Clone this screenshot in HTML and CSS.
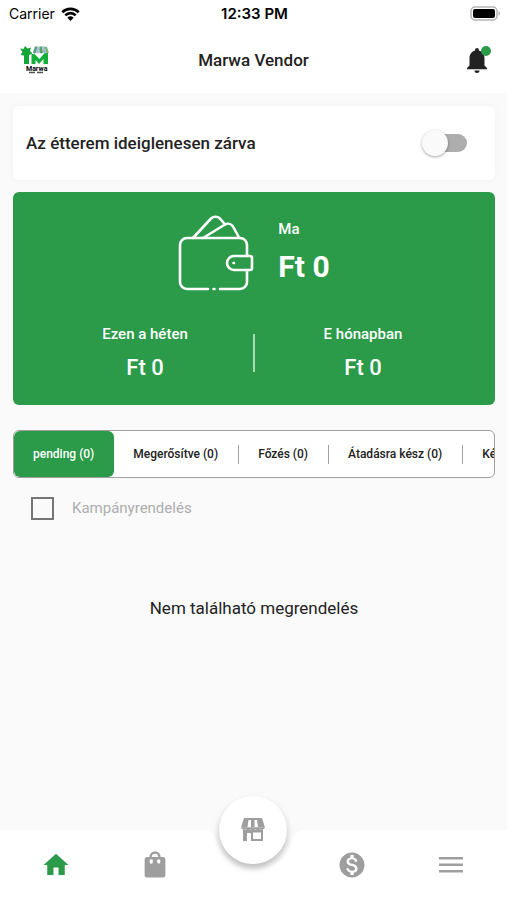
FILE: index.html
```html
<!DOCTYPE html>
<html lang="hu">
<head>
    <meta charset="UTF-8">
    <meta name="viewport" content="width=device-width, initial-scale=1.0">
    <title>Marwa Vendor</title>
    <link rel="stylesheet" href="styles.css">
</head>
<body>
    <div class="status-bar">
        <div class="status-carrier">
            <span>Carrier</span>
            <svg width="19" height="14" viewBox="0 0 19 14" fill="none" stroke="#000" stroke-width="2.6">
                <path d="M1.3 5.2a11.8 11.8 0 0 1 16.4 0"/>
                <path d="M4.3 8.3a7.4 7.4 0 0 1 10.4 0"/>
                <path d="M9.5 14 6.4 10.8a4.5 4.5 0 0 1 6.2 0z" fill="#000" stroke="none"/>
            </svg>
        </div>
        <div class="status-time">12:33 PM</div>
        <div class="status-battery">
            <svg width="30" height="15" viewBox="0 0 30 15">
                <rect x="1" y="1" width="26" height="13" rx="4" fill="#fff" stroke="#b5b5b5" stroke-width="1.5"/>
                <rect x="3" y="3" width="22" height="9" rx="2" fill="#000"/>
                <path d="M28.5 5.2v4.6c1-.4 1.5-1.3 1.5-2.3s-.5-1.9-1.5-2.3z" fill="#b5b5b5"/>
            </svg>
        </div>
    </div>

    <header class="header">
        <svg class="logo" width="30" height="30" viewBox="0 0 30 30" role="img" aria-label="Marwa">
            <path d="M0 3.500l3.500.5L5 1l2.500 2.500 3.500-1-1 3.500 2.500 2.500L9 10v9H4v-8.500L.5 10l2-3z" fill="#12a537"/>
            <path d="M11.500 9h3l5 5L24.500 8H28v11h-4.500v-5L19 19l-3.500-4v4h-4z" fill="#12b03a"/>
            <path d="M15 1.500 13 7.500q1.500 2 3 0L17.500 1.500z" fill="#5b9a7c"/>
            <path d="M17.500 1.500 16 7.500q1.800 2 3.500 0V1.500z" fill="#a6bfe0"/>
            <path d="M19.500 1.500v6q1.800 2 3.500 0L22 1.500z" fill="#55a45a"/>
            <path d="M22 1.500l1 6q1.800 2 3.200 0L24.500 1.500z" fill="#9db7dc"/>
            <path d="M24.500 1.500l1.700 6q1.400 1.500 2.600 0L27 2z" fill="#7ab56f"/>
            <text x="6" y="26" class="logo-name">Marwa</text>
            <path d="M9 27.500h6M17 27.500h6" stroke="#555" stroke-width="1.500"/>
        </svg>
        <h1>Marwa Vendor</h1>
        <button class="bell" type="button" aria-label="Értesítések">
            <svg width="20" height="25" viewBox="0 0 20 25" fill="#222">
                <path d="M7.500 22.500h5a2.500 2.500 0 0 1-5 0z"/>
                <path d="M10 0c-1.100 0-1.900.8-1.900 1.900v.7C4.700 3.500 2.500 6.500 2.500 10v7.500L0 20v1.300h20V20l-2.500-2.500V10c0-3.500-2.200-6.500-5.600-7.400v-.7C11.900.8 11.100 0 10 0z"/>
            </svg>
            <span class="bell-dot"></span>
        </button>
    </header>

    <main class="content">
        <label class="card closed-card">
            <span>Az étterem ideiglenesen zárva</span>
            <input class="switch" type="checkbox" role="switch">
        </label>

        <section class="card earnings">
            <div class="earnings-today">
                <svg width="76" height="76" viewBox="0 0 76 76" fill="none" stroke="#fff" stroke-width="2.6" stroke-linecap="round" stroke-linejoin="round">
                    <path d="M30 74H9a7 7 0 0 1-7-7V30a7 7 0 0 1 7-7h53a7 7 0 0 1 7 7v11M69 55v12a7 7 0 0 1-7 7H42"/>
                    <path d="M72 41H56a7 7 0 0 0 0 14h16a2 2 0 0 0 2-2V43a2 2 0 0 0-2-2z"/>
                    <path d="M15 23 33 3.500a6.500 6.500 0 0 1 9 0l5 6"/>
                    <path d="M25 23 47 9.500a6 6 0 0 1 8 2l6 11"/>
                    <path d="M35.500 74h1M55.500 48h.5"/>
                </svg>
                <div class="today-text">
                    <p class="label">Ma</p>
                    <p class="amount-large">Ft 0</p>
                </div>
            </div>
            <div class="earnings-periods">
                <div class="period">
                    <p class="label">Ezen a héten</p>
                    <p class="amount">Ft 0</p>
                </div>
                <div class="period-divider"></div>
                <div class="period">
                    <p class="label">E hónapban</p>
                    <p class="amount">Ft 0</p>
                </div>
            </div>
        </section>

        <div class="tabs">
            <button class="tab active" type="button">pending (0)</button>
            <button class="tab" type="button">Megerősítve (0)</button>
            <button class="tab" type="button">Főzés (0)</button>
            <button class="tab" type="button">Átadásra kész (0)</button>
            <button class="tab" type="button">Kész (0)</button>
        </div>

        <label class="campaign">
            <input class="checkbox" type="checkbox">
            <span>Kampányrendelés</span>
        </label>

        <p class="empty">Nem található megrendelés</p>
    </main>

    <nav class="bottom-nav">
        <div class="nav-shape">
            <div class="nav-side"></div>
            <svg width="104" height="70" viewBox="0 0 104 70" fill="#fff">
                <path d="M0 0c9 0 12 4 14 10a39 39 0 0 0 76 0c2-6 5-10 14-10v70H0z"/>
            </svg>
            <div class="nav-side"></div>
        </div>
        <div class="nav-items">
            <a class="nav-item active" href="#" aria-label="Kezdőlap">
                <svg width="30" height="30" viewBox="0 0 24 24"><path d="M10 20v-6h4v6h5v-8h3L12 3 2 12h3v8z"/></svg>
            </a>
            <a class="nav-item" href="#" aria-label="Rendelések">
                <svg width="30" height="30" viewBox="0 0 24 24"><path fill-rule="evenodd" d="M18.500 5.500H16.500A4.500 4.500 0 0 0 7.500 5.500H5.500A2 2 0 0 0 3.700 7.500v12.500a2 2 0 0 0 2 2h12.600a2 2 0 0 0 2-2V7.500a2 2 0 0 0-1.800-2zM12 3a2.600 2.600 0 0 1 2.600 2.500H9.400A2.600 2.600 0 0 1 12 3zM10.200 9.700a1.200 1.200 0 0 1-2.400 0V7.500h2.400zM16.200 9.700a1.200 1.200 0 0 1-2.400 0V7.500h2.400z"/></svg>
            </a>
            <a class="nav-item fab" href="#" aria-label="Étterem">
                <svg width="26" height="26" viewBox="0 0 26 26">
                    <path d="M4 1h18l3 9.500H1z"/>
                    <path d="M8.500 3H11v7H7.500zM14.500 3h2.500l1 7h-3.500z" fill="#fff"/>
                    <path d="M1 10.500h24a3 3 0 0 1-4.800 1.500 3.200 3.200 0 0 1-4.800 0 3.200 3.200 0 0 1-4.800 0 3.200 3.200 0 0 1-4.800 0A3 3 0 0 1 1 10.500z"/>
                    <path fill-rule="evenodd" d="M3 12.500h20V24H11v-8H7v8H3zM13 15.500V22h8v-6.500z"/>
                </svg>
            </a>
            <a class="nav-item" href="#" aria-label="Pénztárca">
                <svg width="30" height="30" viewBox="0 0 24 24"><path d="M12 2C6.480 2 2 6.480 2 12s4.480 10 10 10 10-4.480 10-10S17.520 2 12 2zm1.410 16.090V20h-2.670v-1.930c-1.710-.36-3.160-1.460-3.270-3.400h1.960c.1 1.050.82 1.870 2.650 1.870 1.960 0 2.400-.98 2.400-1.590 0-.83-.44-1.610-2.670-2.140-2.480-.6-4.180-1.620-4.180-3.670 0-1.720 1.390-2.840 3.110-3.210V4h2.670v1.950c1.860.45 2.790 1.860 2.850 3.390H14.300c-.05-1.110-.64-1.870-2.220-1.870-1.500 0-2.400.68-2.400 1.640 0 .84.65 1.390 2.670 1.910s4.180 1.390 4.180 3.910c-.01 1.830-1.380 2.830-3.120 3.160z"/></svg>
            </a>
            <a class="nav-item" href="#" aria-label="Menü">
                <svg width="30" height="30" viewBox="0 0 30 30"><path d="M3 7h24v2.500H3zM3 13.500h24V16H3zM3 20h24v2.500H3z"/></svg>
            </a>
        </div>
    </nav>
</body>
</html>
```
FILE: styles.css
```css
:root {
    --primary: #2b9a49;
    --page-bg: #fafafa;
    --text: #222222;
    --muted: #9e9e9e;
    --tab-border: #a0a0a0;
}

* {
    margin: 0;
    padding: 0;
    box-sizing: border-box;
}

body {
    font-family: Roboto, "Liberation Sans", sans-serif;
    background: var(--page-bg);
    color: var(--text);
    min-height: 100vh;
    display: flex;
    flex-direction: column;
}

svg {
    display: block;
}

button {
    font-family: inherit;
    border: none;
    background: none;
    cursor: pointer;
}

/* Status bar */
.status-bar {
    display: grid;
    grid-template-columns: 1fr auto 1fr;
    align-items: center;
    height: 27px;
    padding: 0 7px 0 9px;
    background: white;
    color: black;
    font-family: Inter, sans-serif;
    font-size: 14px;
}

.status-carrier {
    display: flex;
    align-items: center;
    gap: 6px;
}

.status-time {
    font-size: 15px;
    font-weight: 600;
}

.status-battery {
    justify-self: end;
}

/* Header */
.header {
    display: grid;
    grid-template-columns: 1fr auto 1fr;
    align-items: center;
    height: 66px;
    padding: 0 20px;
    background: white;
}

.header h1 {
    font-size: 17px;
    font-weight: 500;
}

.logo-name {
    font-size: 7px;
    font-weight: 700;
}

.bell {
    justify-self: end;
    position: relative;
}

.bell-dot {
    position: absolute;
    top: -2px;
    right: -4px;
    width: 10px;
    height: 10px;
    border-radius: 50%;
    background: var(--primary);
}

/* Content */
.content {
    flex: 1;
    padding: 13px 12px 0 13px;
}

.card {
    border-radius: 6px;
}

.closed-card {
    display: flex;
    align-items: center;
    justify-content: space-between;
    height: 74px;
    padding: 0 28px 0 13px;
    margin-bottom: 12px;
    background: white;
    box-shadow: 0 0 8px rgba(0, 0, 0, 0.04);
    font-size: 17px;
    font-weight: 500;
    cursor: pointer;
}

.switch {
    appearance: none;
    position: relative;
    width: 42px;
    height: 18px;
    border-radius: 9px;
    background: #adadad;
    cursor: pointer;
}

.switch::before {
    content: '';
    position: absolute;
    top: -4px;
    left: -3px;
    width: 26px;
    height: 26px;
    border-radius: 50%;
    background: var(--page-bg);
    box-shadow: 0 1px 3px rgba(0, 0, 0, 0.35);
}

.switch:checked {
    background: #95cca4;
}

.switch:checked::before {
    left: 19px;
    background: var(--primary);
}

.earnings {
    padding: 23px 0;
    margin-bottom: 25px;
    background: var(--primary);
    color: white;
}

.earnings-today {
    display: flex;
    justify-content: center;
    gap: 24px;
    margin-bottom: 33px;
}

.label {
    font-size: 15px;
    line-height: 20px;
    font-weight: 500;
}

.today-text {
    padding-top: 4px;
}

.amount-large {
    margin-top: 10px;
    font-size: 30px;
    line-height: 36px;
    font-weight: 700;
}

.earnings-periods {
    display: flex;
    align-items: center;
    text-align: center;
}

.period {
    flex: 1;
    padding: 0 24px 0 48px;
}

.period:last-child {
    padding: 0 48px 0 24px;
}

.amount {
    margin-top: 10px;
    font-size: 22px;
    line-height: 28px;
    font-weight: 500;
}

.period-divider {
    width: 2px;
    height: 38px;
    background: #a9dbb5;
}

/* Order tabs */
.tabs {
    display: flex;
    height: 48px;
    border: 1px solid var(--tab-border);
    border-radius: 6px;
    background: white;
    overflow: hidden;
}

.tab {
    display: flex;
    align-items: center;
    flex-shrink: 0;
    padding-left: 19px;
    color: var(--text);
    font-size: 12px;
    font-weight: 500;
    white-space: nowrap;
}

.tab::after {
    content: '';
    width: 1px;
    height: 19px;
    margin-left: 20px;
    background: var(--tab-border);
}

.tab.active {
    padding-right: 20px;
    border-radius: 6px;
    background: var(--primary);
    color: white;
}

.tab.active::after {
    display: none;
}

.campaign {
    display: flex;
    align-items: center;
    gap: 18px;
    width: max-content;
    margin: 18px 0 0 18px;
    color: #adadad;
    font-size: 15px;
    line-height: 24px;
    cursor: pointer;
}

.checkbox {
    appearance: none;
    width: 23px;
    height: 23px;
    border: 2px solid #757575;
    cursor: pointer;
}

.checkbox:checked {
    border-color: var(--primary);
    background: var(--primary);
}

.empty {
    padding: 76px 0;
    text-align: center;
    font-size: 17px;
    line-height: 24px;
}

/* Bottom navigation */
.bottom-nav {
    position: sticky;
    bottom: 0;
    height: 70px;
}

.nav-shape {
    position: absolute;
    inset: 0;
    display: flex;
}

.nav-side {
    flex: 1;
    background: white;
}

.nav-items {
    position: relative;
    display: grid;
    grid-template-columns: repeat(5, 1fr);
    grid-template-rows: 70px;
    align-items: center;
    justify-items: center;
    padding: 0 7px;
}

.nav-item {
    fill: var(--muted);
}

.nav-item.active {
    fill: var(--primary);
}

/* Raised button, centred on the top edge of the bar */
.fab {
    display: flex;
    align-items: center;
    justify-content: center;
    width: 68px;
    height: 68px;
    margin-top: -70px;
    border-radius: 50%;
    background: white;
    box-shadow: 0 4px 6px rgba(0, 0, 0, 0.25);
}
```
